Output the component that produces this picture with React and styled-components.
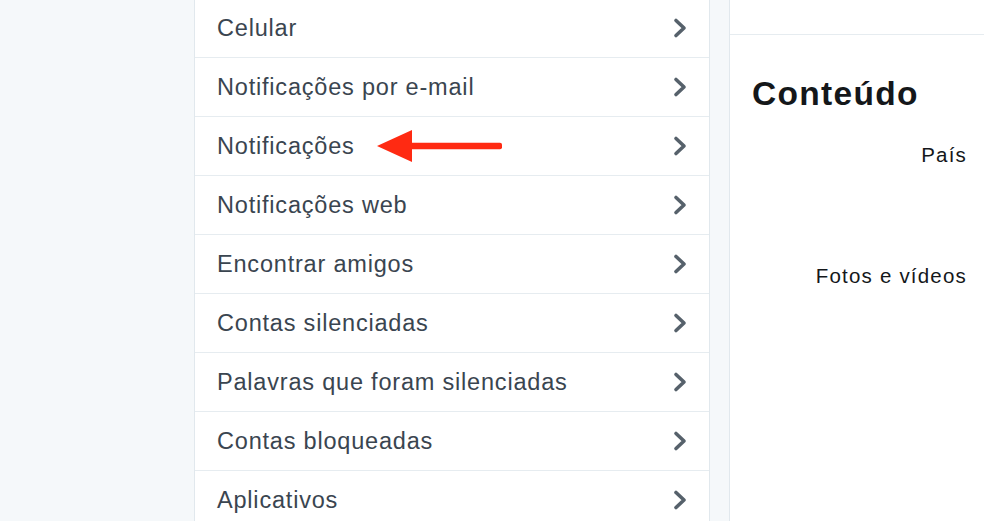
import styled, { createGlobalStyle } from "styled-components";

const GlobalStyle = createGlobalStyle`
  html, body {
    margin: 0;
    padding: 0;
    background: #f5f8fa;
    overflow: hidden;
  }
  body {
    font-family: "Liberation Sans", Arial, sans-serif;
  }
`;

const Page = styled.div`
  display: flex;
  align-items: flex-start;
  gap: 19px;
  padding-left: 194px;
  height: 521px;
`;

const NavPanel = styled.ul`
  list-style: none;
  margin: -1px 0 0;
  padding: 0;
  width: 516px;
  box-sizing: border-box;
  background: #fff;
  border-left: 1px solid #e1e8ed;
  border-right: 1px solid #e1e8ed;
`;

const NavRow = styled.li`
  position: relative;
  display: flex;
  align-items: center;
  justify-content: space-between;
  height: 58px;
  padding: 0 22px;
  border-bottom: 1px solid #e6ecf0;
  color: #3a4550;
  font-size: 23.5px;
  letter-spacing: 0.8px;
  cursor: pointer;
`;

const Chevron = styled.svg`
  flex-shrink: 0;
  margin-right: -1px;
`;

const Pointer = styled.svg`
  position: absolute;
  left: 182px;
  top: 12px;
`;

const ContentPanel = styled.section`
  flex: 1;
  align-self: stretch;
  background: #fff;
  border-left: 1px solid #e1e8ed;
`;

const TopBar = styled.div`
  height: 34px;
  border-bottom: 1px solid #e6ecf0;
`;

const Heading = styled.h2`
  margin: 39px 0 0;
  padding-left: 22px;
  font-size: 33.5px;
  line-height: 40px;
  font-weight: 700;
  letter-spacing: 1.3px;
  color: #14171a;
`;

const Form = styled.div`
  display: flex;
  flex-direction: column;
  margin-top: 29px;
  padding-right: 17px;
`;

const Field = styled.div`
  display: flex;
  justify-content: flex-end;
  min-height: ${({ height }) => (height ? `${height}px` : "auto")};
`;

const Label = styled.label`
  font-size: 20.5px;
  line-height: 24px;
  letter-spacing: 1.2px;
  color: #14171a;
`;

const ChevronIcon = () => (
  <Chevron width="16" height="22" viewBox="0 0 16 22">
    <path
      d="M4 3.5 L12 11 L4 18.5"
      fill="none"
      stroke="#56616b"
      strokeWidth="3.6"
      strokeLinecap="round"
      strokeLinejoin="round"
    />
  </Chevron>
);

const RedArrow = () => (
  <Pointer width="126" height="34" viewBox="0 0 126 34">
    <polygon points="0,17 35,1 35,33" fill="#ff2a12" />
    <rect x="33" y="13.8" width="92" height="6.4" rx="2" fill="#ff2a12" />
  </Pointer>
);

const items = [
  "Celular",
  "Notificações por e-mail",
  "Notificações",
  "Notificações web",
  "Encontrar amigos",
  "Contas silenciadas",
  "Palavras que foram silenciadas",
  "Contas bloqueadas",
  "Aplicativos",
];

const App = () => {
  return (
    <>
      <GlobalStyle />
      <Page>
        <NavPanel>
          {items.map((label, index) => (
            <NavRow key={`nav-${index}`}>
              <span>{label}</span>
              <ChevronIcon />
              {label === "Notificações" && <RedArrow />}
            </NavRow>
          ))}
        </NavPanel>

        <ContentPanel>
          <TopBar />
          <Heading>Conteúdo</Heading>
          <Form>
            <Field height={121}>
              <Label>País</Label>
            </Field>
            <Field>
              <Label>Fotos e vídeos</Label>
            </Field>
          </Form>
        </ContentPanel>
      </Page>
    </>
  );
};

export default App;
